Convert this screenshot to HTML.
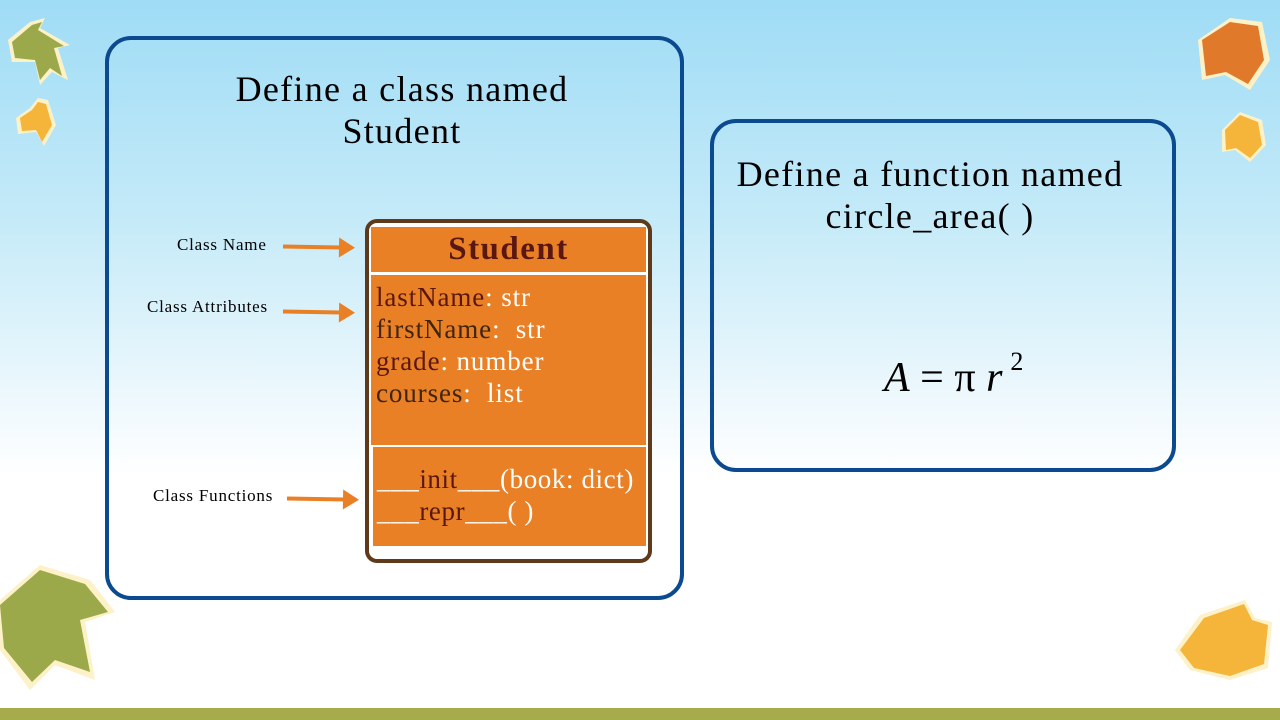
<!DOCTYPE html>
<html><head><style>
*{margin:0;padding:0;box-sizing:border-box}
body{width:1280px;height:720px;position:relative;overflow:hidden;font-family:"Liberation Serif",serif;background:linear-gradient(180deg,#9fdcf6 0%,#c4eaf8 30%,#e8f6fc 52%,#fff 66%,#fff 100%)}
.box{position:absolute;border:4px solid #0b4a8e;border-radius:26px}
.t{position:absolute;font-size:36px;letter-spacing:1.3px;color:#000;text-align:center;line-height:42px;white-space:nowrap}
.lbl{position:absolute;font-size:17px;letter-spacing:0.8px;color:#000}
.arr{position:absolute;height:4px;background:#e98025}
.arr:after{content:"";position:absolute;right:-14px;top:-8px;border-left:16px solid #e98025;border-top:10px solid transparent;border-bottom:10px solid transparent}
.or{position:absolute;background:#e98025}
.d{color:#5a1712}.w{color:#fff}
.attr{font-size:27px;line-height:32px;padding-left:5px;letter-spacing:0.9px;white-space:nowrap}
</style></head><body>
<div class="box" style="left:105px;top:36px;width:579px;height:564px"></div>
<div class="t" style="left:180px;top:68px;width:444px">Define a class named<br>Student</div>
<div class="box" style="left:710px;top:119px;width:466px;height:353px"></div>
<div class="t" style="left:702px;top:153px;width:456px">Define a function named<br>circle_area( )</div>
<div style="position:absolute;left:884px;top:353px;font-size:42px;font-style:italic;font-family:'Liberation Serif',serif;white-space:nowrap">A<span style="font-style:normal"> = π</span> r<sup style="font-size:26px;font-style:normal;position:relative;top:-6px;margin-left:8px">2</sup></div>

<div class="lbl" style="left:177px;top:235px">Class Name</div>
<div class="lbl" style="left:147px;top:297px">Class Attributes</div>
<div class="lbl" style="left:153px;top:486px">Class Functions</div>
<div class="arr" style="left:283px;top:245px;width:58px;transform:rotate(1deg)"></div>
<div class="arr" style="left:283px;top:310px;width:58px;transform:rotate(1deg)"></div>
<div class="arr" style="left:287px;top:497px;width:58px;transform:rotate(1deg)"></div>

<div style="position:absolute;left:365px;top:219px;width:287px;height:344px;border:4px solid #5e3a1a;border-radius:12px;background:#fff"></div>
<div class="or" style="left:371px;top:227px;width:275px;height:45px;text-align:center;font-weight:bold;font-size:33px;letter-spacing:1.5px;line-height:45px;color:#5a1712">Student</div>
<div class="or attr" style="left:371px;top:275px;width:275px;height:170px;padding-top:6px">
<span class="d">lastName</span><span class="w">: str</span><br>
<span class="d" style="color:#3f2410">firstName</span><span class="w">:&nbsp; str</span><br>
<span class="d">grade</span><span class="w">: number</span><br>
<span class="d" style="color:#3f2410">courses</span><span class="w">:&nbsp; list</span></div>
<div class="or attr" style="left:373px;top:447px;width:273px;height:99px;padding-top:16px;padding-left:4px;letter-spacing:0.6px">
<span class="w">___</span><span class="d">init</span><span class="w">___(book: dict)</span><br>
<span class="w">___</span><span class="d">repr</span><span class="w">___( )</span></div>

<svg style="position:absolute;left:0;top:0" width="1280" height="720">
<g fill="#fdf1c8"><path d="M8 40 L30 22 L45 18 L40 28 L70 45 L58 48 L68 80 L52 72 L40 85 L35 62 L12 62 Z"/></g>
<g fill="#9ba94a"><path d="M12 42 L32 25 L42 22 L38 30 L64 46 L54 48 L62 76 L50 68 L40 80 L35 60 L15 58 Z"/></g>
<g fill="#fdf1c8"><path d="M16 118 L30 108 L38 98 L48 100 L56 125 L44 146 L36 132 L18 134 Z"/></g>
<g fill="#f5b43a"><path d="M20 118 L32 110 L38 102 L46 104 L52 125 L42 142 L36 130 L22 131 Z"/></g>
<g fill="#fdf1c8"><path d="M1198 40 L1230 18 L1262 22 L1270 60 L1250 90 L1225 75 L1202 80 Z"/></g>
<g fill="#e07a2a"><path d="M1202 40 L1230 22 L1258 26 L1264 60 L1248 84 L1226 72 L1206 76 Z"/></g>
<g fill="#fdf1c8"><path d="M1222 130 L1240 112 L1262 120 L1266 145 L1250 162 L1235 150 L1222 152 Z"/></g>
<g fill="#f5b43a"><path d="M1225 130 L1240 115 L1258 122 L1262 145 L1250 158 L1236 148 L1226 150 Z"/></g>
<g fill="#fdf1c8"><path d="M0 600 L40 565 L90 580 L115 612 L85 622 L95 680 L55 665 L30 690 L0 650 Z"/></g>
<g fill="#9ba94a"><path d="M0 605 L40 570 L85 584 L108 612 L80 620 L90 672 L55 660 L32 682 L4 648 Z"/></g>
<g fill="#fdf1c8"><path d="M1175 650 L1200 615 L1245 600 L1255 618 L1272 622 L1268 668 L1230 680 L1190 670 Z"/></g>
<g fill="#f5b43a"><path d="M1180 650 L1204 618 L1244 604 L1252 620 L1268 625 L1264 664 L1230 676 L1194 668 Z"/></g>
</svg>
<div style="position:absolute;left:0;top:708px;width:1280px;height:12px;background:#a6ab4c"></div>
</body></html>
